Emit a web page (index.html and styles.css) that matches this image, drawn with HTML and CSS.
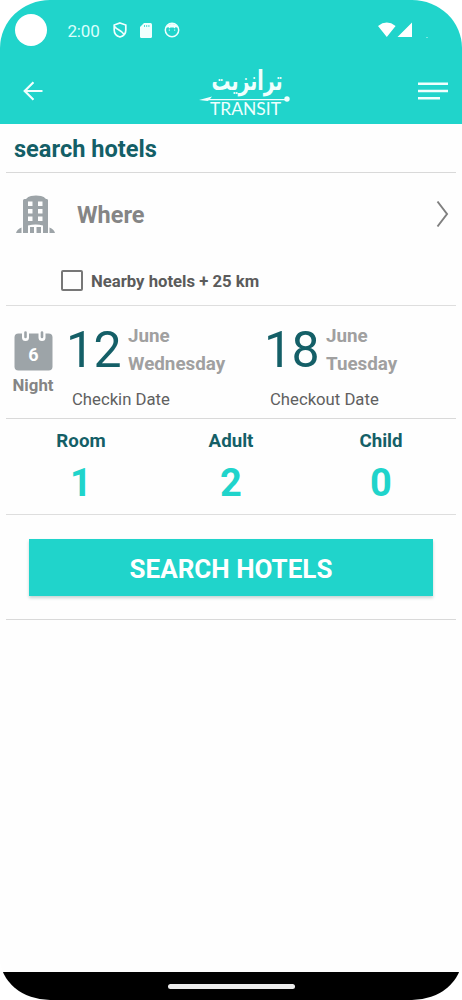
FILE: index.html
```
<!DOCTYPE html>
<html lang="en">
<head>
<meta charset="utf-8">
<title>Search hotels</title>
<link rel="stylesheet" href="styles.css">
</head>
<body>
<div class="phone">
  <header class="top">
    <div class="status">
      <span class="camera"></span>
      <span class="clock">2:00</span>
      <svg class="st-shield" width="14" height="16" viewBox="0 0 14 16" fill="none" stroke="currentColor" stroke-width="1.700"><path d="M7 1 12.800 3V8C12.800 11.500 10.500 14 7 15 3.500 14 1.200 11.500 1.200 8V3Z"/><path d="M2 4.500C3 8 8 7.500 11 12.500"/></svg>
      <svg class="st-card" width="12" height="15" viewBox="0 0 12 15"><path fill="currentColor" d="M4 0H10.500Q12 0 12 1.500V13.500Q12 15 10.500 15H1.500Q0 15 0 13.500V4Z"/><path d="M4.500 2V4M6.700 2V4M8.900 2V4" stroke="#20d4cb" stroke-width="0.800"/></svg>
      <svg class="st-face" width="16" height="16" viewBox="0 0 16 16"><circle cx="8" cy="8" r="6.700" fill="none" stroke="currentColor" stroke-width="1.500"/><path d="M2 6C3 0.500 13 0.500 14 6L11.500 5 11 6.500 9.500 5.500H6.500L5 6.500 4.500 5Z" fill="currentColor"/><path d="M5.300 7.500V8.700M10.700 7.500V8.700" stroke="currentColor"/></svg>
      <svg class="st-net" width="35" height="16" viewBox="0 0 35 16" fill="currentColor"><path d="M0 4Q8.800-2.800 17.600 4L8.800 15ZM19.500 15 34 0.500V15Z"/></svg>
      <span class="speck"></span>
    </div>
    <nav class="bar">
      <svg class="back" width="20" height="20" viewBox="0 0 20 20" fill="none" stroke="currentColor" stroke-width="2.200"><path d="M19.500 10H2M10.500 1.200 1.700 10 10.500 18.800"/></svg>
      <svg class="logo" width="94" height="60" viewBox="0 -4 94 60" fill="currentColor">
        <text class="logo-ar" x="48" y="24.500" text-anchor="middle" textLength="71" lengthAdjust="spacingAndGlyphs" direction="rtl">ترانزيت</text>
        <path d="M0 35 13 31.500 11 34H88V35.200H10L8.500 36Z"/>
        <circle cx="88" cy="34" r="2.700"/>
        <text class="logo-en" x="11" y="50" textLength="71" lengthAdjust="spacingAndGlyphs">TRANSIT</text>
      </svg>
      <svg class="menu" width="30" height="18" viewBox="0 0 30 18" fill="currentColor"><path d="M0 0.500H30V3H0ZM0 7.700H30V10.200H0ZM0 14.900H22V17.400H0Z"/></svg>
    </nav>
  </header>
  <main>
    <h1 class="title">search hotels</h1>
    <section class="place">
      <div class="where">
        <svg class="hotel" width="39" height="39" viewBox="0 0 39 39"><path fill="#9da4a8" fill-rule="evenodd" d="M7 38V5.500Q7 4 8.500 4H10Q12 1.500 15 1 20 0 25 1 28 1.500 30 4H31Q32 4 32 5.500V38H27V30.500Q20 28.500 12 30.500V38ZM12 6.500V11H16.500V6.500ZM22 6.500V11H26.500V6.500ZM12 14V18.500H16.500V14ZM22 14V18.500H26.500V14ZM12 21.500V26H16.500V21.500ZM22 21.500V26H26.500V21.500ZM14 32H18V38H14ZM20.500 32H25V38H20.500ZM0 38Q1 34 5.500 32.500V38ZM33.500 38V32.500Q38 34 39 38Z"/></svg>
        <span class="where-label">Where</span>
        <svg class="chevron" width="13" height="28" viewBox="0 0 13 28" fill="none" stroke="#808080" stroke-width="2"><path d="M1.500 1.500 11 14 1.500 26.500"/></svg>
      </div>
      <label class="nearby"><span class="box"></span><span class="nearby-text">Nearby hotels + 25 km</span></label>
    </section>
    <section class="dates">
      <div class="night">
        <svg width="39" height="40" viewBox="0 0 39 40"><rect x="0.500" y="2.500" width="38" height="37" rx="4" fill="#9da4a8"/><g fill="none" stroke-linecap="round"><path d="M11.500 0V6.500M28 0V6.500" stroke="#fefefe" stroke-width="7"/><path d="M11.500 1.500V6M28 1.500V6" stroke="#9da4a8" stroke-width="2.600"/></g><text class="nights" x="19.500" y="30" text-anchor="middle">6</text></svg>
        <span class="night-label">Night</span>
      </div>
      <div class="date">
        <div class="day-row"><span class="day">12</span><div class="names"><span>June</span><span>Wednesday</span></div></div>
        <span class="caption">Checkin Date</span>
      </div>
      <div class="date">
        <div class="day-row"><span class="day">18</span><div class="names"><span>June</span><span>Tuesday</span></div></div>
        <span class="caption">Checkout Date</span>
      </div>
    </section>
    <section class="guests">
      <div class="guest"><span class="kind">Room</span><span class="count">1</span></div>
      <div class="guest"><span class="kind">Adult</span><span class="count">2</span></div>
      <div class="guest"><span class="kind">Child</span><span class="count">0</span></div>
    </section>
    <section class="action"><button class="search">SEARCH HOTELS</button></section>
  </main>
  <footer class="gesture"><span class="handle"></span></footer>
</div>
</body>
</html>
```
FILE: styles.css
```
* { box-sizing: border-box; }
body { margin: 0; background: #fff; font-family: Roboto, sans-serif; }
.phone { width: 462px; height: 1000px; display: flex; flex-direction: column; overflow: hidden; border-radius: 50px 50px 50px 50px / 48px 48px 42px 42px; background: #fefefe; }
.top { height: 124px; background: #20d4cb; color: #f0fffe; flex: none; }
.status { height: 60px; display: flex; align-items: center; padding: 0 31px 0 15px; }
.camera { width: 32px; height: 32px; border-radius: 50%; background: #fff; }
.clock { margin-left: 20.500px; width: 45px; font-size: 17px; line-height: 20px; padding-top: 2px; color: #d9fffc; letter-spacing: -0.2px; }
.st-card { margin-left: 13.500px; }
.st-face { margin-left: 12px; }
.st-net { margin-left: auto; color: #fff; }
.speck { width: 2px; height: 1px; background: #77e7e0; margin: 14px 3px 0 13px; }
.bar { height: 62px; display: flex; align-items: center; padding: 0 14px 0 23px; }
.logo { margin-left: 156px; overflow: visible; }
.logo-ar { font: bold 27px "DejaVu Sans", sans-serif; }
.logo-en { font: 18px Lato, sans-serif; }
.menu { margin-left: auto; }
main { flex: 1; padding: 0 6px; }
.title { margin: 0; height: 49px; padding: 11px 0 0 8px; font-size: 23.600px; line-height: 28px; font-weight: 700; color: #145f67; border-bottom: 1px solid #d9d9d9; }
.place { height: 133px; border-bottom: 1px solid #dedede; padding-top: 18px; }
.where { height: 46px; display: flex; align-items: center; padding: 0 7px 0 10px; }
.where-label { margin-left: 22px; padding-top: 2px; font-size: 23.500px; font-weight: 700; color: #858585; }
.chevron { margin-left: auto; }
.nearby { display: flex; align-items: center; margin: 31px 0 0 55px; height: 25px; }
.box { width: 22px; height: 21px; border: 2px solid #777; border-radius: 2px; }
.nearby-text { margin-left: 8px; padding-top: 1px; font-size: 16.700px; font-weight: 700; color: #5b5b5b; }
.dates { height: 113px; border-bottom: 1px solid #d9d9d9; display: grid; grid-template-columns: 63px 198px 1fr; }
.night { width: 54px; display: flex; flex-direction: column; align-items: center; padding-top: 25px; }
.nights { font: bold 18px Roboto, sans-serif; fill: #fff; }
.night-label { font-size: 16.800px; line-height: 20px; font-weight: 700; color: #858585; margin-top: 4px; }
.day-row { display: flex; height: 83px; margin-left: -3px; }
.day { width: 62px; flex: none; font-size: 50px; line-height: 60px; padding-top: 14px; letter-spacing: -0.5px; color: #145f67; }
.names { display: flex; flex-direction: column; padding-top: 16px; font-size: 18.800px; line-height: 28px; font-weight: 700; color: #a0a0a0; }
.caption { display: block; margin-left: 3px; font-size: 16.700px; line-height: 22px; color: #606060; }
.guests { height: 96px; border-bottom: 1px solid #dedede; display: grid; grid-template-columns: repeat(3, 1fr); }
.guest { display: flex; flex-direction: column; align-items: center; padding-top: 10px; }
.kind { font-size: 18.700px; line-height: 24px; font-weight: 700; color: #145f67; }
.count { font-size: 38px; line-height: 46px; margin-top: 7px; font-weight: 700; color: #20d4cb; }
.action { height: 105px; border-bottom: 1px solid #d9d9d9; padding: 24px 23px 0; }
.search { display: block; width: 404px; height: 57px; padding: 2px 0 0; border: 0; background: #20d4cb; color: #fff; font: 700 26px Roboto, sans-serif; box-shadow: 0 2px 3px #c4d4d3; }
.gesture { flex: none; height: 28px; background: #000; display: flex; justify-content: center; align-items: center; }
.handle { width: 127px; height: 5px; border-radius: 3px; background: #ececec; }
```
